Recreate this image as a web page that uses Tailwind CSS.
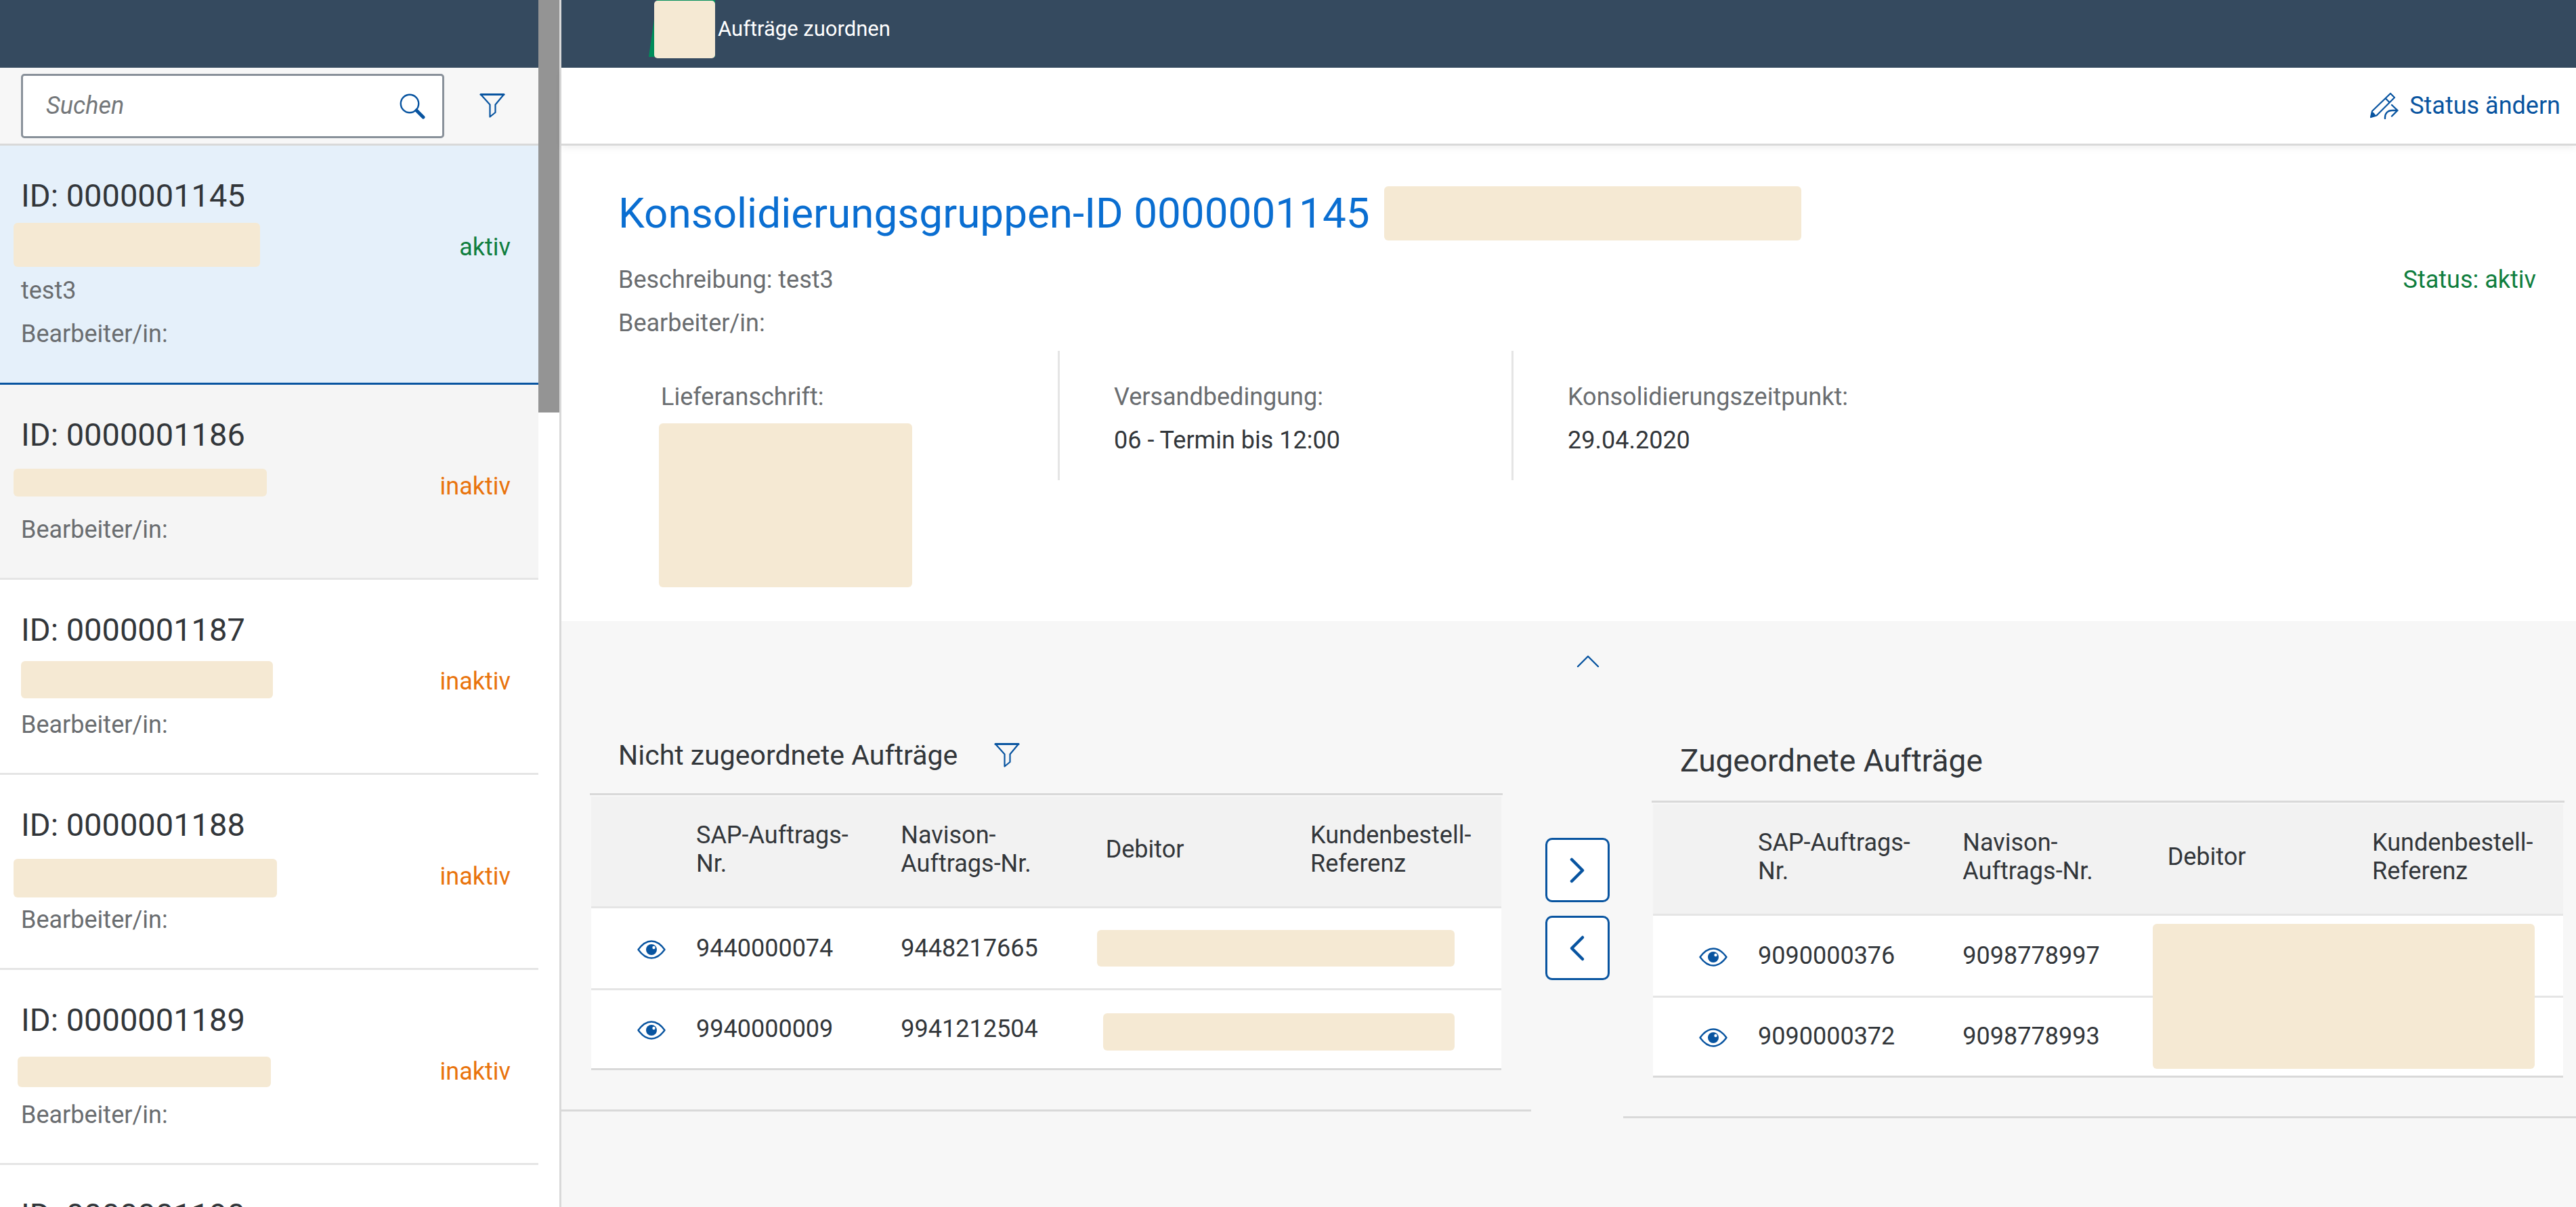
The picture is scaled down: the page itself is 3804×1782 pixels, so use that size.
<!DOCTYPE html>
<html lang="de">
<head>
    <meta charset="UTF-8">
    <meta name="viewport" content="width=device-width, initial-scale=1.0">
    <title>Aufträge zuordnen</title>
    <script src="https://cdn.jsdelivr.net/npm/@tailwindcss/browser@4"></script>
</head>
<body class="h-screen flex overflow-hidden bg-[#f7f7f7] font-[Roboto,sans-serif] text-[36px] text-[#32363a]">

    <!-- icons -->
    <svg class="hidden">
        <symbol id="icon-search" viewBox="0 0 38 38">
            <circle cx="15" cy="15" r="13.2" fill="none" stroke="currentColor" stroke-width="2.4" />
            <path d="M25 25L35 35" stroke="currentColor" stroke-width="5" stroke-linecap="round" />
        </symbol>
        <symbol id="icon-filter" viewBox="0 0 38 38">
            <path d="M2 2.5H36L23.5 17.5V29L15.5 35.5V17.5Z" fill="none" stroke="currentColor" stroke-width="2.2" stroke-linejoin="round" />
            <path d="M2 2.5H36" stroke="currentColor" stroke-width="3.2" stroke-linecap="round" />
        </symbol>
        <symbol id="icon-eye" viewBox="0 0 42 28">
            <path d="M1.5 14C8 5 14 1.5 21 1.5S34 5 40.5 14C34 23 28 26.5 21 26.5S8 23 1.5 14Z" fill="none" stroke="currentColor" stroke-width="2.4" stroke-linejoin="round" />
            <circle cx="21" cy="14" r="8" fill="currentColor" />
            <circle cx="24.5" cy="11" r="2.2" fill="#fff" />
        </symbol>
        <symbol id="icon-edit" viewBox="0 0 42 40">
            <path d="M1 37L3 28L30 2L36 8L9.5 34.5Z" fill="none" stroke="currentColor" stroke-width="2.2" stroke-linejoin="round" />
            <path d="M1 37L2.5 29.5L5 30L9 35Z" fill="currentColor" />
            <path d="M22.5 9L29 15.5" stroke="currentColor" stroke-width="2.2" />
            <path d="M22 39C21.5 31 26 27 33 27H40M32 19L40.5 27L32 35.5" fill="none" stroke="currentColor" stroke-width="2.4" stroke-linecap="round" stroke-linejoin="round" />
        </symbol>
    </svg>

    <aside class="relative w-[829px] shrink-0 h-full border-r-3 border-[#d9d9d9] bg-white overflow-hidden">
        <div class="h-[100px] bg-[#354a5f]"></div>
        <div class="w-[795px] h-[115px] border-b-3 border-[#d9d9d9] bg-[#f7f7f7] flex items-center pl-[31px]">
            <div class="relative w-[625px]">
                <input type="search" aria-label="Suchen" placeholder="Suchen" class="w-full h-[95px] border-3 border-[#89919a] rounded-[5px] bg-white pl-[34px] pr-24 text-[36px] italic placeholder:text-[#74777a]">
                <button type="button" aria-label="Suche starten" class="absolute right-7 top-[29px] text-[#0854a0]"><svg class="block size-[38px]"><use href="#icon-search" /></svg></button>
            </div>
            <button type="button" aria-label="Filter" class="ml-[52px] text-[#0854a0]"><svg class="block size-[38px]"><use href="#icon-filter" /></svg></button>
        </div>
        <ul class="w-[795px] text-[#6a6d70] leading-[64px]">
            <li class="relative pt-[46px] pb-10 px-[31px] bg-[#e5f0fa] border-b-3 border-[#0854a0]">
                <h2 class="text-[47px] leading-[56px] text-[#32363a] mb-4">ID: 0000001145</h2>
                <p class="h-16 text-right pr-[10px] text-[#107e3e]">aktiv</p>
                <p>test3</p>
                <p>Bearbeiter/in:</p>
                <span class="absolute left-[20px] top-[114px] w-[364px] h-[65px] rounded-md bg-[#f5e9d3]"></span>
            </li>
            <li class="relative pt-[46px] pb-[39px] px-[31px] bg-[#f5f5f5] border-b-3 border-[#e5e5e5]">
                <h2 class="text-[47px] leading-[56px] text-[#32363a] mb-4">ID: 0000001186</h2>
                <p class="h-16 text-right pr-[10px] text-[#e9730c]">inaktiv</p>
                <p>Bearbeiter/in:</p>
                <span class="absolute left-[20px] top-[124px] w-[374px] h-[41px] rounded-md bg-[#f5e9d3]"></span>
            </li>
            <li class="relative pt-[46px] pb-[39px] px-[31px] border-b-3 border-[#e5e5e5]">
                <h2 class="text-[47px] leading-[56px] text-[#32363a] mb-4">ID: 0000001187</h2>
                <p class="h-16 text-right pr-[10px] text-[#e9730c]">inaktiv</p>
                <p>Bearbeiter/in:</p>
                <span class="absolute left-[31px] top-[120px] w-[372px] h-[55px] rounded-md bg-[#f5e9d3]"></span>
            </li>
            <li class="relative pt-[46px] pb-[39px] px-[31px] border-b-3 border-[#e5e5e5]">
                <h2 class="text-[47px] leading-[56px] text-[#32363a] mb-4">ID: 0000001188</h2>
                <p class="h-16 text-right pr-[10px] text-[#e9730c]">inaktiv</p>
                <p>Bearbeiter/in:</p>
                <span class="absolute left-[20px] top-[124px] w-[389px] h-[57px] rounded-md bg-[#f5e9d3]"></span>
            </li>
            <li class="relative pt-[46px] pb-[39px] px-[31px] border-b-3 border-[#e5e5e5]">
                <h2 class="text-[47px] leading-[56px] text-[#32363a] mb-4">ID: 0000001189</h2>
                <p class="h-16 text-right pr-[10px] text-[#e9730c]">inaktiv</p>
                <p>Bearbeiter/in:</p>
                <span class="absolute left-[26px] top-[128px] w-[374px] h-[45px] rounded-md bg-[#f5e9d3]"></span>
            </li>
            <li class="relative pt-[46px] pb-[39px] px-[31px] border-b-3 border-[#e5e5e5]">
                <h2 class="text-[47px] leading-[56px] text-[#32363a] mb-4">ID: 0000001190</h2>
                <p class="h-16 text-right pr-[10px] text-[#e9730c]">inaktiv</p>
                <p>Bearbeiter/in:</p>
            </li>
        </ul>
        <!-- scrollbar thumb -->
        <div class="absolute right-0 top-0 w-[31px] h-[609px] bg-[#949494]"></div>
    </aside>

    <main class="flex-1 min-w-0">
        <header class="h-[100px] bg-[#354a5f] flex items-start pl-[129px]">
            <svg class="w-[98px] h-[86px] shrink-0" viewBox="0 0 98 86">
                <path d="M0 84L12 0H98V84Z" fill="#008d5a" />
                <rect x="8" y="1" width="90" height="85" rx="5" fill="#f5e9d3" />
            </svg>
            <h1 class="ml-1 text-[31px] leading-[86px] text-white">Aufträge zuordnen</h1>
        </header>

        <div class="relative h-[115px] bg-white border-b-3 border-[#d9d9d9] shadow-[0_4px_10px_rgba(0,0,0,0.06)] flex items-center justify-end pr-[23px]">
            <button type="button" class="flex items-center gap-4 text-[#0854a0]">
                <svg class="w-[42px] h-10"><use href="#icon-edit" /></svg>
                Status ändern
            </button>
        </div>

        <section class="bg-white h-[702px] pt-[60px] pl-[84px] pr-[59px]">
            <div class="flex items-center gap-[21px] h-[80px]">
                <h2 class="text-[62px] leading-[80px] text-[#0a6ed1]">Konsolidierungsgruppen-ID 0000001145</h2>
                <span class="w-[616px] h-[80px] rounded-md bg-[#f5e9d3]"></span>
            </div>
            <div class="flex justify-between mt-[26px] leading-[64px] text-[#6a6d70]">
                <div>
                    <p>Beschreibung: test3</p>
                    <p>Bearbeiter/in:</p>
                </div>
                <p class="text-[#107e3e]">Status: aktiv</p>
            </div>
            <div class="flex mt-[9px] leading-[64px]">
                <div class="w-[649px] pt-9 pl-[60px]">
                    <p class="pl-[3px] text-[#6a6d70]">Lieferanschrift:</p>
                    <div class="mt-[7px] w-[374px] h-[242px] rounded-md bg-[#f5e9d3]"></div>
                </div>
                <div class="w-[670px] h-[191px] pt-9 pl-20 border-l-3 border-[#e5e5e5]">
                    <p class="text-[#6a6d70]">Versandbedingung:</p>
                    <p>06 - Termin bis 12:00</p>
                </div>
                <div class="h-[191px] pt-9 pl-20 border-l-3 border-[#e5e5e5]">
                    <p class="text-[#6a6d70]">Konsolidierungszeitpunkt:</p>
                    <p>29.04.2020</p>
                </div>
            </div>
        </section>

        <div class="h-[118px] flex justify-center items-center">
            <button type="button" aria-label="Kopfbereich einklappen" class="text-[#0854a0] pl-[56px]">
                <svg class="block w-[34px] h-[20px]" viewBox="0 0 34 20"><path d="M2 18L17 3L32 18" fill="none" stroke="currentColor" stroke-width="2.4" stroke-linecap="round" stroke-linejoin="round" /></svg>
            </button>
        </div>

        <div class="grid grid-cols-[1432fr_136px_1407fr] items-start">
            <section class="border-b-3 border-[#d9d9d9] px-[42px] pb-[58px]">
                <div class="h-[139px] border-b-3 border-[#d9d9d9] flex items-center pl-[42px] pt-6">
                    <h3 class="text-[41px] leading-[56px]">Nicht zugeordnete Aufträge</h3>
                    <button type="button" aria-label="Aufträge filtern" class="ml-[54px] text-[#0854a0]"><svg class="block size-[38px]"><use href="#icon-filter" /></svg></button>
                </div>
                <div class="mt-[2px] mx-[2px]">
                    <table class="w-full table-fixed text-left">
                        <colgroup><col class="w-[140px]"><col><col><col><col class="w-[297px]"></colgroup>
                        <thead class="bg-[#f2f2f2] leading-[42px]">
                            <tr class="h-[163px] border-b-3 border-[#e5e5e5]">
                                <td></td>
                                <th class="font-normal px-[15px] pb-1.5">SAP-Auftrags-<br>Nr.</th>
                                <th class="font-normal px-[15px] pb-1.5">Navison-<br>Auftrags-Nr.</th>
                                <th class="font-normal px-[15px] pb-1.5">Debitor</th>
                                <th class="font-normal px-[15px] pb-1.5 whitespace-nowrap">Kundenbestell-<br>Referenz</th>
                            </tr>
                        </thead>
                        <tbody class="bg-white">
                            <tr class="h-[121px] border-b-3 border-[#e5e5e5]">
                                <td class="pl-[68px] pt-1"><button type="button" aria-label="Anzeigen" class="block text-[#0854a0]"><svg class="block w-[42px] h-7"><use href="#icon-eye" /></svg></button></td>
                                <td class="px-[15px]">9440000074</td>
                                <td class="px-[15px]">9448217665</td>
                                <td colspan="2"><div class="ml-[2px] w-[528px] h-[54px] rounded-md bg-[#f5e9d3]"></div></td>
                            </tr>
                            <tr class="h-[118px] border-b-3 border-[#d9d9d9]">
                                <td class="pl-[68px] pt-1"><button type="button" aria-label="Anzeigen" class="block text-[#0854a0]"><svg class="block w-[42px] h-7"><use href="#icon-eye" /></svg></button></td>
                                <td class="px-[15px]">9940000009</td>
                                <td class="px-[15px]">9941212504</td>
                                <td colspan="2"><div class="ml-[11px] mt-2 w-[519px] h-[55px] rounded-md bg-[#f5e9d3]"></div></td>
                            </tr>
                        </tbody>
                    </table>
                </div>
            </section>

            <div class="flex flex-col items-center gap-5 pt-[202px]">
                <button type="button" aria-label="Zuordnen" class="size-[95px] rounded-[10px] border-3 border-[#0854a0] bg-white text-[#0854a0] flex items-center justify-center">
                    <svg class="w-[24px] h-[40px]" viewBox="0 0 24 40"><path d="M4 4L20 20L4 36" fill="none" stroke="currentColor" stroke-width="4.5" stroke-linecap="round" stroke-linejoin="round" /></svg>
                </button>
                <button type="button" aria-label="Zuordnung aufheben" class="size-[95px] rounded-[10px] border-3 border-[#0854a0] bg-white text-[#0854a0] flex items-center justify-center">
                    <svg class="w-[24px] h-[40px]" viewBox="0 0 24 40"><path d="M20 4L4 20L20 36" fill="none" stroke="currentColor" stroke-width="4.5" stroke-linecap="round" stroke-linejoin="round" /></svg>
                </button>
            </div>

            <section class="border-b-3 border-[#d9d9d9] pl-[42px] pr-[17px] pb-[57px]">
                <div class="h-[150px] border-b-3 border-[#d9d9d9] flex items-center pl-[42px] pt-7">
                    <h3 class="text-[46px] leading-[60px]">Zugeordnete Aufträge</h3>
                </div>
                <div class="relative mt-[2px] mx-[2px]">
                    <table class="w-full table-fixed text-left">
                        <colgroup><col class="w-[140px]"><col><col><col><col class="w-[297px]"></colgroup>
                        <thead class="bg-[#f2f2f2] leading-[42px]">
                            <tr class="h-[163px] border-b-3 border-[#e5e5e5]">
                                <td></td>
                                <th class="font-normal px-[15px] pb-1.5">SAP-Auftrags-<br>Nr.</th>
                                <th class="font-normal px-[15px] pb-1.5">Navison-<br>Auftrags-Nr.</th>
                                <th class="font-normal px-[15px] pb-1.5">Debitor</th>
                                <th class="font-normal px-[15px] pb-1.5 whitespace-nowrap">Kundenbestell-<br>Referenz</th>
                            </tr>
                        </thead>
                        <tbody class="bg-white">
                            <tr class="h-[121px] border-b-3 border-[#e5e5e5]">
                                <td class="pl-[68px] pt-1"><button type="button" aria-label="Anzeigen" class="block text-[#0854a0]"><svg class="block w-[42px] h-7"><use href="#icon-eye" /></svg></button></td>
                                <td class="px-[15px]">9090000376</td>
                                <td class="px-[15px]">9098778997</td>
                                <td></td>
                                <td></td>
                            </tr>
                            <tr class="h-[118px] border-b-3 border-[#d9d9d9]">
                                <td class="pl-[68px] pt-1"><button type="button" aria-label="Anzeigen" class="block text-[#0854a0]"><svg class="block w-[42px] h-7"><use href="#icon-eye" /></svg></button></td>
                                <td class="px-[15px]">9090000372</td>
                                <td class="px-[15px]">9098778993</td>
                                <td></td>
                                <td></td>
                            </tr>
                        </tbody>
                    </table>
                    <span class="absolute right-[42px] bottom-[13px] w-[564px] h-[214px] rounded-md bg-[#f5e9d3]"></span>
                </div>
            </section>
        </div>
    </main>
</body>
</html>
